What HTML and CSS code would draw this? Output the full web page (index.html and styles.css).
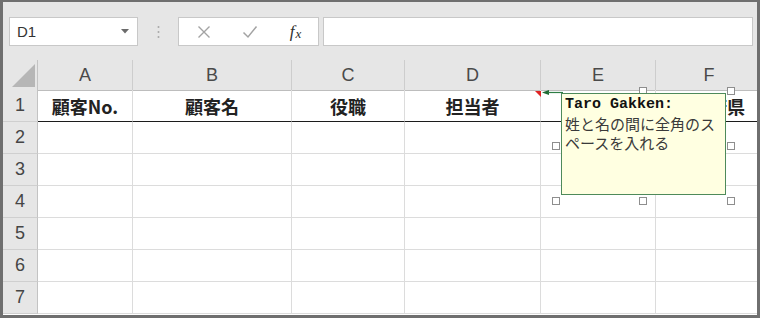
FILE: index.html
```html
<!DOCTYPE html>
<html lang="ja">
<head>
  <meta charset="UTF-8">
  <title>顧客リスト - コメント</title>
  <link rel="stylesheet" href="styles.css">
</head>
<body>

  <div class="window">
    <div class="toolbar">
      <div class="namebox">
        <span>D1</span>
        <svg class="drop" width="8" height="5" viewBox="0 0 8 5"><path d="M0 0H8L4 4.5Z" fill="#6b6b6b"/></svg>
      </div>
      <div class="grip">
        <svg width="3" height="14" viewBox="0 0 3 14"><circle cx="1.5" cy="2" r="1" fill="#a9a9a9"/><circle cx="1.5" cy="7" r="1" fill="#a9a9a9"/><circle cx="1.5" cy="12" r="1" fill="#a9a9a9"/></svg>
      </div>
      <div class="fxbox">
        <span class="btn"><svg width="14" height="14" viewBox="0 0 14 14"><path d="M1.5 1.5L12.5 12.5M12.5 1.5L1.5 12.5" stroke="#a3a3a3" stroke-width="1.4"/></svg></span>
        <span class="btn"><svg width="16" height="14" viewBox="0 0 16 14"><path d="M1.5 7.5L6 12L14.5 1.5" stroke="#a3a3a3" stroke-width="1.5" fill="none"/></svg></span>
        <span class="btn fx"><i>f</i><i class="x">x</i></span>
      </div>
      <div class="formula"></div>
    </div>

    <div class="sheet">
      <div class="row head">
        <div class="corner"><svg width="35" height="30" viewBox="0 0 35 30"><path d="M9 27H32V4Z" fill="#b6b6b6"/></svg></div>
        <div class="ch">A</div><div class="ch">B</div><div class="ch">C</div><div class="ch">D</div><div class="ch">E</div><div class="ch">F</div>
      </div>
      <div class="row first">
        <div class="rh">1</div>
        <div class="cell">顧客No.</div><div class="cell">顧客名</div><div class="cell">役職</div><div class="cell">担当者</div><div class="cell"></div><div class="cell">都道府県</div>
      </div>
      <div class="row"><div class="rh">2</div><div class="cell"></div><div class="cell"></div><div class="cell"></div><div class="cell"></div><div class="cell"></div><div class="cell"></div></div>
      <div class="row"><div class="rh">3</div><div class="cell"></div><div class="cell"></div><div class="cell"></div><div class="cell"></div><div class="cell"></div><div class="cell"></div></div>
      <div class="row"><div class="rh">4</div><div class="cell"></div><div class="cell"></div><div class="cell"></div><div class="cell"></div><div class="cell"></div><div class="cell"></div></div>
      <div class="row"><div class="rh">5</div><div class="cell"></div><div class="cell"></div><div class="cell"></div><div class="cell"></div><div class="cell"></div><div class="cell"></div></div>
      <div class="row"><div class="rh">6</div><div class="cell"></div><div class="cell"></div><div class="cell"></div><div class="cell"></div><div class="cell"></div><div class="cell"></div></div>
      <div class="row"><div class="rh">7</div><div class="cell"></div><div class="cell"></div><div class="cell"></div><div class="cell"></div><div class="cell"></div><div class="cell"></div></div>

      <!-- comment on D1, in edit mode -->
      <svg class="pointer" width="32" height="12" viewBox="0 0 32 12">
        <path d="M2 3H8V9Z" fill="#e02424"/>
        <path d="M9 4.5L16 2V7Z" fill="#1f6b34"/>
        <path d="M15 4.5H30" stroke="#2e7d45" stroke-width="1.2"/>
      </svg>
      <span class="handle" style="left: 636px; top: 27px;"></span>
      <span class="handle" style="left: 724px; top: 27px;"></span>
      <span class="handle" style="left: 549px; top: 82px;"></span>
      <span class="handle" style="left: 724px; top: 82px;"></span>
      <span class="handle" style="left: 549px; top: 137px;"></span>
      <span class="handle" style="left: 636px; top: 137px;"></span>
      <span class="handle" style="left: 724px; top: 137px;"></span>
      <div class="comment">
        <b>Taro Gakken:</b>
        <p>姓と名の間に全角のスペースを入れる</p>
      </div>
    </div>
  </div>

</body>
</html>
```

FILE: styles.css
```css
body {
  margin: 0;
  font-family: "Liberation Sans", "Noto Sans CJK JP", sans-serif;
  background: #ffffff;
}
.window {
  width: 760px;
  height: 318px;
  box-sizing: border-box;
  border: 3px solid #6f6f6f;
  border-top-width: 2px;
  background: #e6e6e6;
  display: flex;
  flex-direction: column;
  overflow: hidden;
}
.toolbar {
  height: 58px;
  flex: none;
  display: flex;
  align-items: flex-start;
  padding: 15px 0 0 6px;
  box-sizing: border-box;
}
.namebox {
  width: 129px;
  height: 29px;
  box-sizing: border-box;
  background: #fff;
  border: 1px solid #c8c8c8;
  display: flex;
  align-items: center;
  justify-content: space-between;
  padding: 0 8px 0 7px;
  font-size: 15px;
  color: #333;
}
.grip {
  width: 40px;
  height: 29px;
  display: flex;
  align-items: center;
  justify-content: center;
}
.fxbox {
  width: 141px;
  height: 29px;
  box-sizing: border-box;
  background: #fff;
  border: 1px solid #c8c8c8;
  display: grid;
  grid-template-columns: 50px 42px 49px;
  align-items: center;
}
.btn {
  display: flex;
  justify-content: center;
  align-items: center;
}
.fx {
  font-family: "Liberation Serif", serif;
  color: #2f2f2f;
  font-size: 17px;
}
.fx .x {
  font-size: 13px;
  margin-top: 4px;
  margin-left: 1px;
}
.formula {
  width: 430px;
  height: 29px;
  margin-left: 4px;
  box-sizing: border-box;
  background: #fff;
  border: 1px solid #c8c8c8;
}
.sheet {
  position: relative;
  flex: 1;
  background: #fff;
  overflow: hidden;
}
.row {
  display: grid;
  grid-template-columns: 35px 95px 159px 113px 136px 115px 107px;
  height: 32px;
}
.row.head {
  height: 30px;
  background: #e6e6e6;
}
.corner {
  border-right: 1px solid #c3c3c3;
  border-bottom: 1px solid #bdbdbd;
}
.corner svg {
  display: block;
  margin-right: -1px;
}
.ch {
  display: flex;
  align-items: center;
  justify-content: center;
  font-size: 18px;
  color: #4a4a4a;
  border-right: 1px solid #cdcdcd;
  border-bottom: 1px solid #bdbdbd;
}
.rh {
  display: flex;
  align-items: center;
  justify-content: center;
  background: #e6e6e6;
  font-size: 18px;
  color: #454545;
  border-right: 1px solid #c3c3c3;
  border-bottom: 1px solid #cfcfcf;
}
.cell {
  display: flex;
  align-items: center;
  justify-content: center;
  border-right: 1px solid #dcdcdc;
  border-bottom: 1px solid #dcdcdc;
  white-space: nowrap;
}
.first .cell {
  border-bottom-color: #1c1c1c;
  font-family: "Noto Sans CJK JP", sans-serif;
  font-weight: 700;
  font-size: 18px;
  color: #222;
}
.pointer {
  position: absolute;
  left: 530px;
  top: 28px;
}
.handle {
  position: absolute;
  width: 6px;
  height: 6px;
  background: #fff;
  border: 1px solid #8e8e8e;
}
.comment {
  position: absolute;
  left: 558px;
  top: 33px;
  width: 165px;
  height: 102px;
  box-sizing: border-box;
  background: #ffffe1;
  border: 1px solid #4e8a5a;
  padding: 2px 3px;
  color: #3a3a3a;
}
.comment b {
  display: block;
  font-family: "Liberation Mono", monospace;
  font-size: 15px;
  line-height: 18px;
  color: #111;
}
.comment p {
  margin: 0;
  font-family: "Noto Sans CJK JP", sans-serif;
  font-size: 15px;
  line-height: 19px;
}
```
